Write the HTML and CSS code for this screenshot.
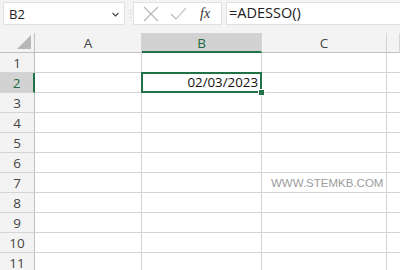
FILE: index.html
```html
<!DOCTYPE html>
<html lang="it">
<head>
    <meta charset="UTF-8">
    <title>ADESSO</title>
    <link rel="stylesheet" href="styles.css">
</head>
<body>
    <div class="topbar">
        <div class="namebox">
            <span>B2</span>
            <svg class="chev" width="7" height="5" viewBox="0 0 7 5"><path d="M0.5 1 L3.5 4 L6.5 1" fill="none" stroke="#444" stroke-width="1.1"/></svg>
        </div>
        <div class="dots">&#8942;</div>
        <div class="fxbox">
            <svg width="16" height="16" viewBox="0 0 16 16"><path d="M1 1 L15 15 M15 1 L1 15" stroke="#b4b4b4" stroke-width="1.1" fill="none"/></svg>
            <svg width="17" height="16" viewBox="0 0 17 16"><path d="M1 8 L6 13 L16 2" stroke="#b4b4b4" stroke-width="1.1" fill="none"/></svg>
            <span class="fx">fx</span>
        </div>
        <div class="formula">=ADESSO()</div>
    </div>

    <div class="sheet">
        <div class="hd corner"><span class="tri"></span></div>
        <div class="hd col">A</div>
        <div class="hd col sel">B</div>
        <div class="hd col">C</div>
        <div class="hd col"></div>

        <div class="hd row">1</div><div class="c"></div><div class="c"></div><div class="c"></div><div class="c"></div>
        <div class="hd row sel">2</div><div class="c"></div><div class="c active">02/03/2023<span class="box"></span><span class="handle"></span></div><div class="c"></div><div class="c"></div>
        <div class="hd row">3</div><div class="c"></div><div class="c"></div><div class="c"></div><div class="c"></div>
        <div class="hd row">4</div><div class="c"></div><div class="c"></div><div class="c"></div><div class="c"></div>
        <div class="hd row">5</div><div class="c"></div><div class="c"></div><div class="c"></div><div class="c"></div>
        <div class="hd row">6</div><div class="c"></div><div class="c"></div><div class="c"></div><div class="c"></div>
        <div class="hd row">7</div><div class="c"></div><div class="c"></div><div class="c mark">WWW.STEMKB.COM</div><div class="c"></div>
        <div class="hd row">8</div><div class="c"></div><div class="c"></div><div class="c"></div><div class="c"></div>
        <div class="hd row">9</div><div class="c"></div><div class="c"></div><div class="c"></div><div class="c"></div>
        <div class="hd row">10</div><div class="c"></div><div class="c"></div><div class="c"></div><div class="c"></div>
        <div class="hd row">11</div><div class="c"></div><div class="c"></div><div class="c"></div><div class="c"></div>
    </div>
</body>
</html>
```

FILE: styles.css
```css
body {
    margin: 0;
    width: 400px;
    height: 270px;
    overflow: hidden;
    background-color: #ffffff;
    font-family: "Open Sans", "Liberation Sans", sans-serif;
}

/* barra della formula */
.topbar {
    display: flex;
    align-items: center;
    height: 33px;
    padding: 0 0 0 3px;
    box-sizing: border-box;
    background-color: #f3f3f3;
}

.namebox {
    width: 122px;
    height: 23px;
    box-sizing: border-box;
    background-color: #fff;
    border: 1px solid #e1e1e1;
    display: flex;
    align-items: center;
    justify-content: space-between;
    padding: 0 5px 0 5px;
    font-size: 13px;
    color: #222;
    margin-top: -6px;
}

.chev {
    margin-top: 1px;
}

.dots {
    width: 8px;
    color: #c8c8c8;
    font-size: 11px;
    text-align: center;
    margin-top: -6px;
}

.fxbox {
    width: 89px;
    height: 23px;
    box-sizing: border-box;
    background-color: #fff;
    border: 1px solid #e1e1e1;
    display: flex;
    align-items: center;
    gap: 11px;
    padding-left: 9px;
    margin-top: -6px;
}

.fx {
    font-family: "Liberation Serif", serif;
    font-style: italic;
    font-size: 14px;
    color: #333;
    margin-left: 2px;
}

.formula {
    flex: 1;
    height: 23px;
    box-sizing: border-box;
    margin-left: 4px;
    background-color: #fff;
    border: 1px solid #e1e1e1;
    border-right: none;
    padding-left: 2px;
    font-size: 14.5px;
    line-height: 20px;
    color: #222;
    margin-top: -6px;
}

/* griglia */
.sheet {
    display: grid;
    grid-template-columns: 35px 107px 120px 125px 1fr;
    grid-auto-rows: 20px;
}

.hd {
    background-color: #f3f3f3;
    color: #444;
    font-size: 13.5px;
    display: flex;
    align-items: center;
    justify-content: center;
    box-sizing: border-box;
    border-bottom: 1px solid #d4d4d4;
}

.col {
    border-bottom: 1px solid #c0c0c0;
    border-right: 1px solid #d4d4d4;
    padding-top: 1px;
}

.col:last-child {
    border-right: none;
}

.corner {
    border-right: 1px solid #c0c0c0;
    border-bottom: 1px solid #c0c0c0;
    position: relative;
}

.tri {
    position: absolute;
    right: 3px;
    bottom: 3px;
    width: 0;
    height: 0;
    border-left: 14px solid transparent;
    border-bottom: 14px solid #b7b7b7;
}

.row {
    border-right: 1px solid #c0c0c0;
}

.col.sel {
    background-color: #d2d2d2;
    color: #1e6b41;
    border-bottom: 2px solid #217346;
}

.row.sel {
    background-color: #d2d2d2;
    color: #1e6b41;
    border-right: 2px solid #217346;
}

.c {
    box-sizing: border-box;
    border-right: 1px solid #d4d4d4;
    border-bottom: 1px solid #d4d4d4;
    font-size: 13.3px;
    color: #111;
}

.c:nth-child(5n) {
    border-right: none;
}

.active {
    position: relative;
    text-align: right;
    padding-right: 3px;
    line-height: 19px;
}

.box {
    position: absolute;
    left: -1px;
    top: -1px;
    right: -1px;
    bottom: -1px;
    border: 2px solid #217346;
}

.handle {
    position: absolute;
    right: -4px;
    bottom: -4px;
    width: 5px;
    height: 5px;
    background-color: #217346;
    border: 1px solid #fff;
}

.mark {
    font-family: "Liberation Sans", sans-serif;
    font-size: 11.5px;
    color: #9c9c9c;
    padding-left: 9px;
    line-height: 20px;
}
```
